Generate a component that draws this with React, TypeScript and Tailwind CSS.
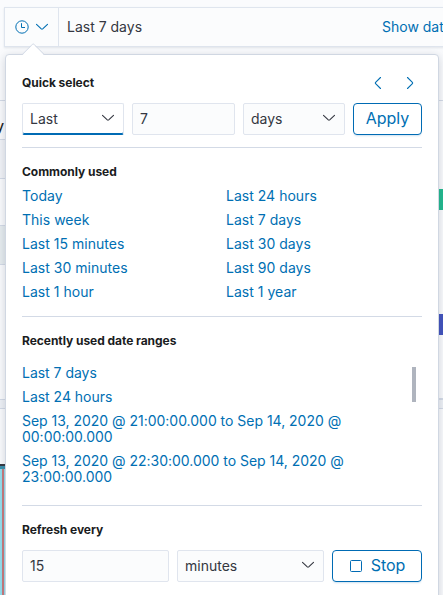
import React from "react";

const common = [
  ["Today", "Last 24 hours"],
  ["This week", "Last 7 days"],
  ["Last 15 minutes", "Last 30 days"],
  ["Last 30 minutes", "Last 90 days"],
  ["Last 1 hour", "Last 1 year"],
];

const recent = [
  "Last 7 days",
  "Last 24 hours",
  "Sep 13, 2020 @ 21:00:00.000 to Sep 14, 2020 @ 00:00:00.000",
  "Sep 13, 2020 @ 22:30:00.000 to Sep 14, 2020 @ 23:00:00.000",
];

function Chevron({ className = "" }: { className?: string }) {
  return (
    <svg width="14" height="8" viewBox="0 0 14 8" fill="none" stroke="currentColor" strokeWidth="1.1" strokeLinecap="round" strokeLinejoin="round" className={className}>
      <path d="M1.5 1.3 L6.3 5.9 Q7 6.5 7.7 5.9 L12.5 1.3" />
    </svg>
  );
}

function SideArrow({ next = false }: { next?: boolean }) {
  return (
    <svg width="8" height="14" viewBox="0 0 8 14" fill="none" stroke="currentColor" strokeWidth="1.1" strokeLinecap="round" strokeLinejoin="round">
      <path d={next ? "M1.5 1.5 L6.4 6.4 Q7 7 6.4 7.6 L1.5 12.5" : "M6.5 1.5 L1.6 6.4 Q1 7 1.6 7.6 L6.5 12.5"} />
    </svg>
  );
}

function Field({ text, select = false, focused = false, className }: { text: string; select?: boolean; focused?: boolean; className: string }) {
  return (
    <div
      className={`flex h-8 items-center justify-between rounded-[2px] border pl-[7px] pr-2 text-[14px] text-[#343741] ${
        focused
          ? "border-[#e0e5ee] border-b-[#006bb4] bg-white shadow-[inset_0_-1px_0_#006bb4]"
          : "border-[#e0e5ee] bg-[#fbfcfd]"
      } ${className}`}
    >
      <span className="leading-5">{text}</span>
      {select && <Chevron className="-mt-[2px]" />}
    </div>
  );
}

function Title({ children }: { children: React.ReactNode }) {
  return <h2 className="text-[12px] leading-[18px] font-bold tracking-[-0.05px] text-[#1a1c21]">{children}</h2>;
}

function Rule() {
  return <div className="h-px w-full shrink-0 bg-[#d3dae6]" />;
}

function Backdrop() {
  return (
    <div className="absolute inset-0 flex justify-between">
      <div className="flex w-[5px] flex-col overflow-hidden pt-[100px]">
        <div className="flex h-[39px] shrink-0 items-center justify-end border-t border-[#d3dae6] bg-[#f9fafc] pt-[10px] pr-[1px] text-[14px] font-medium text-[#1a1c21]">y</div>
        <div className="h-[39px] shrink-0 border-t border-[#d3dae6] bg-[#f1f3f7]" />
        <div className="h-[47px] shrink-0 border-t border-[#d3dae6] bg-[#fafbfd]" />
        <div className="h-[39px] shrink-0 border-t border-[#d3dae6] bg-[#e6ecef]" />
        <div className="h-[136px] shrink-0 border-y border-[#d3dae6] bg-[#fafbfd]" />
        <div className="h-[8px] shrink-0 bg-[#eef1f6]" />
        <div className="h-[56px] shrink-0 border-t border-[#d3dae6] bg-[#fafbfd]" />
        <div className="h-[2px] shrink-0 bg-[#343741]" />
        <div className="h-[3px] shrink-0 bg-[#3990ad]" />
        <div className="flex flex-1 bg-[#93dfee]">
          <div className="ml-[2px] w-[2px] bg-[#c9797c]" />
        </div>
      </div>
      <div className="flex w-[5px] flex-col pt-[100px]">
        <div className="h-[89px] shrink-0 border-t border-[#d3dae6] bg-[#fafbfd]" />
        <div className="h-[21px] shrink-0 bg-[#1fb98d]" />
        <div className="h-[104px] shrink-0 bg-[#fafbfd]" />
        <div className="h-[21px] shrink-0 bg-[#3f51bd]" />
        <div className="h-[65px] shrink-0 border-b-2 border-[#d3dae6] bg-[#fafbfd]" />
        <div className="h-[8px] shrink-0 bg-[#eef1f6]" />
        <div className="flex-1 border-t border-[#d3dae6] bg-[#fafbfd]" />
      </div>
    </div>
  );
}

export default function App() {
  return (
    <div className="relative h-[595px] w-[443px] overflow-hidden bg-[#fafbfd] pt-[7px] font-['Inter',sans-serif] text-[14px] text-[#006fb3]">
      <Backdrop />

      <div className="relative ml-1 flex h-10 w-[460px] items-center border border-[#dfe5ee] bg-[#fbfcfd] shadow-[0_1px_2px_rgba(152,162,179,0.25)]">
        <div className="flex h-full w-[54px] shrink-0 items-center border-r border-[#dfe5ee] pl-[10px]">
          <svg width="14" height="14" viewBox="0 0 14 14" fill="none" stroke="currentColor" strokeWidth="1">
            <circle cx="7" cy="7" r="6.2" />
            <path d="M6.5 3.2 V7.5 H10" />
          </svg>
          <Chevron className="ml-[6px]" />
        </div>
        <span className="w-[315px] shrink-0 pb-[2px] pl-2 text-[#343741]">Last 7 days</span>
        <span className="shrink-0 pb-[2px] pl-[8px]">Show dates</span>
      </div>

      <div className="relative mt-[7px] ml-[5px] h-[560px] w-[434px] rounded-[4px] border border-[#d0d7e2] bg-white px-4 pt-4 shadow-[0_2px_10px_rgba(80,90,110,0.25)]">
        <svg className="absolute -top-[12px] left-[16px]" width="24" height="13" viewBox="0 0 24 13">
          <path d="M0.5 12 L11.2 1.2 L21.9 12 V13 H0.5 Z" fill="white" />
          <path d="M0 11.8 L10.5 1.2 Q11.2 0.6 11.9 1.2 L22.5 11.8" fill="none" stroke="#d3dae6" />
        </svg>

        <div className="flex h-6 items-center justify-between">
          <Title>Quick select</Title>
          <div className="flex gap-6 pr-2">
            <SideArrow />
            <SideArrow next />
          </div>
        </div>
        <div className="mt-2 flex gap-2">
          <Field text="Last" select focused className="w-[102px]" />
          <Field text="7" className="w-[103px]" />
          <Field text="days" select className="w-[102px]" />
          <button className="h-8 w-[69px] rounded-[4px] border border-[#006bb4] bg-white pb-[2px] text-[16px] shadow-[0_2px_2px_-1px_rgba(0,107,180,0.2)]">Apply</button>
        </div>
        <div className="mt-3"><Rule /></div>

        <div className="mt-[15px]"><Title>Commonly used</Title></div>
        <div className="mt-[3px]">
          {common.map(([left, right]) => (
            <div key={left} className="grid h-6 grid-cols-[204px_1fr] items-center leading-4 tracking-[0.02px]">
              <a>{left}</a>
              <a>{right}</a>
            </div>
          ))}
        </div>
        <div className="mt-3"><Rule /></div>

        <div className="mt-[15px]"><Title>Recently used date ranges</Title></div>
        <div className="mt-[15px] flex h-[140px] items-start justify-between">
          <div className="flex w-[340px] flex-col gap-2 leading-4 tracking-[-0.02px]">
            {recent.map((range) => <a key={range}>{range}</a>)}
          </div>
          <div className="mr-[6px] mt-[2px] h-[35px] w-1 bg-[#afb4be]" />
        </div>
        <Rule />

        <div className="mt-[15px]"><Title>Refresh every</Title></div>
        <div className="mt-[11px] flex gap-2">
          <Field text="15" className="w-[147px]" />
          <Field text="minutes" select className="w-[147px]" />
          <button className="flex h-8 w-[90px] items-center justify-center gap-[9px] rounded-[4px] border border-[#006bb4] bg-white pl-[1px] text-[16px] shadow-[0_2px_2px_-1px_rgba(0,107,180,0.2)]">
            <span className="h-3 w-3 rounded-[1.5px] border border-[#006bb4]" />
            <span className="pb-[2px]">Stop</span>
          </button>
        </div>
      </div>
    </div>
  );
}
